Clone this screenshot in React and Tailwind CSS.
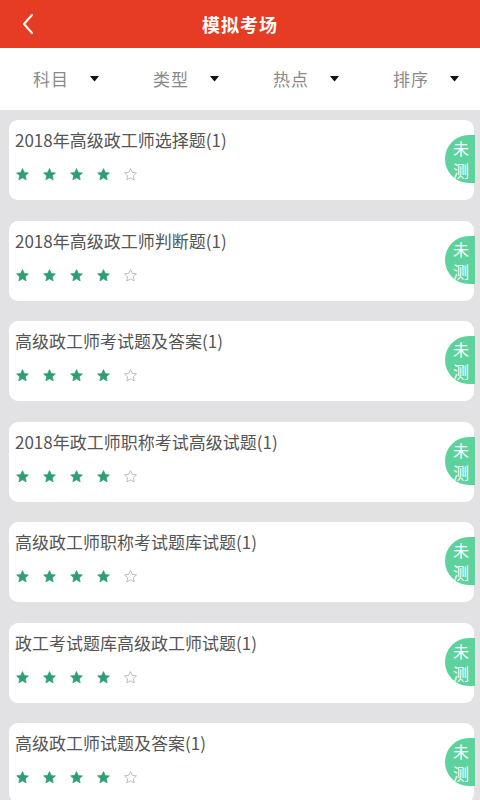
import React from 'react';

const FONT = '"Noto Sans CJK SC", "Noto Sans", Roboto, sans-serif';

const filters = ['科目', '类型', '热点', '排序'];

const items = [
  '2018年高级政工师选择题(1)',
  '2018年高级政工师判断题(1)',
  '高级政工师考试题及答案(1)',
  '2018年政工师职称考试高级试题(1)',
  '高级政工师职称考试题库试题(1)',
  '政工考试题库高级政工师试题(1)',
  '高级政工师试题及答案(1)',
];

const Star = ({ filled }) => (
  <svg width="15" height="15" viewBox="0 0 24 24">
    <path
      d="M12 2.5l2.9 6.1 6.6.8-4.9 4.6 1.3 6.6L12 17.3l-5.9 3.3 1.3-6.6-4.9-4.6 6.6-.8z"
      fill={filled ? '#2f9e72' : 'none'}
      stroke={filled ? '#2f9e72' : '#b5b5b5'}
      strokeWidth={filled ? 1 : 1.4}
      strokeLinejoin="round"
    />
  </svg>
);

const Card = ({ title }) => (
  <div className="relative h-[80px] bg-white rounded-[9px] ml-[9px] mr-[6px] pl-[6px] pt-[6px]">
    <div className="text-[17px] leading-[28px] text-[#555555]">{title}</div>
    <div className="flex gap-[12px] mt-[13px]">
      {[0, 1, 2, 3, 4].map((i) => (
        <Star key={i} filled={i < 4} />
      ))}
    </div>
    <div className="absolute right-[-1px] top-[15px] w-[30px] h-[48px] rounded-l-full bg-[#5ed29c] flex flex-col items-center justify-center pl-[2px] text-white text-[16px] leading-[22px]">
      <span className="block h-[22px]">未</span>
      <span className="block h-[22px]">测</span>
    </div>
  </div>
);

export default function App() {
  return (
    <div className="w-[480px] h-[800px] overflow-hidden bg-[#e2e1e3]" style={{ fontFamily: FONT }}>
      {/* Header */}
      <div className="relative h-[48px] bg-[#e63c23] flex items-center justify-center">
        <svg className="absolute left-[20px] top-[13px]" width="16" height="22" viewBox="0 0 16 22">
          <path d="M12 2L4 11l8 9" fill="none" stroke="white" strokeWidth="2" strokeLinecap="round" strokeLinejoin="round" />
        </svg>
        <span className="text-white text-[18px] font-bold tracking-[1px]">模拟考场</span>
      </div>

      {/* Filters */}
      <div className="h-[62px] bg-white grid grid-cols-4 items-center">
        {filters.map((f) => (
          <div key={f} className="flex items-center pl-[33px]">
            <span className="text-[17px] text-[#8a8a8a] tracking-[1px]">{f}</span>
            <svg className="ml-[21px]" width="9" height="6" viewBox="0 0 9 6">
              <path d="M0 0h9L4.5 5.5z" fill="#111" />
            </svg>
          </div>
        ))}
      </div>

      {/* List */}
      <div className="flex flex-col gap-[20.5px] pt-[10px]">
        {items.map((t) => (
          <Card key={t} title={t} />
        ))}
      </div>
    </div>
  );
}
